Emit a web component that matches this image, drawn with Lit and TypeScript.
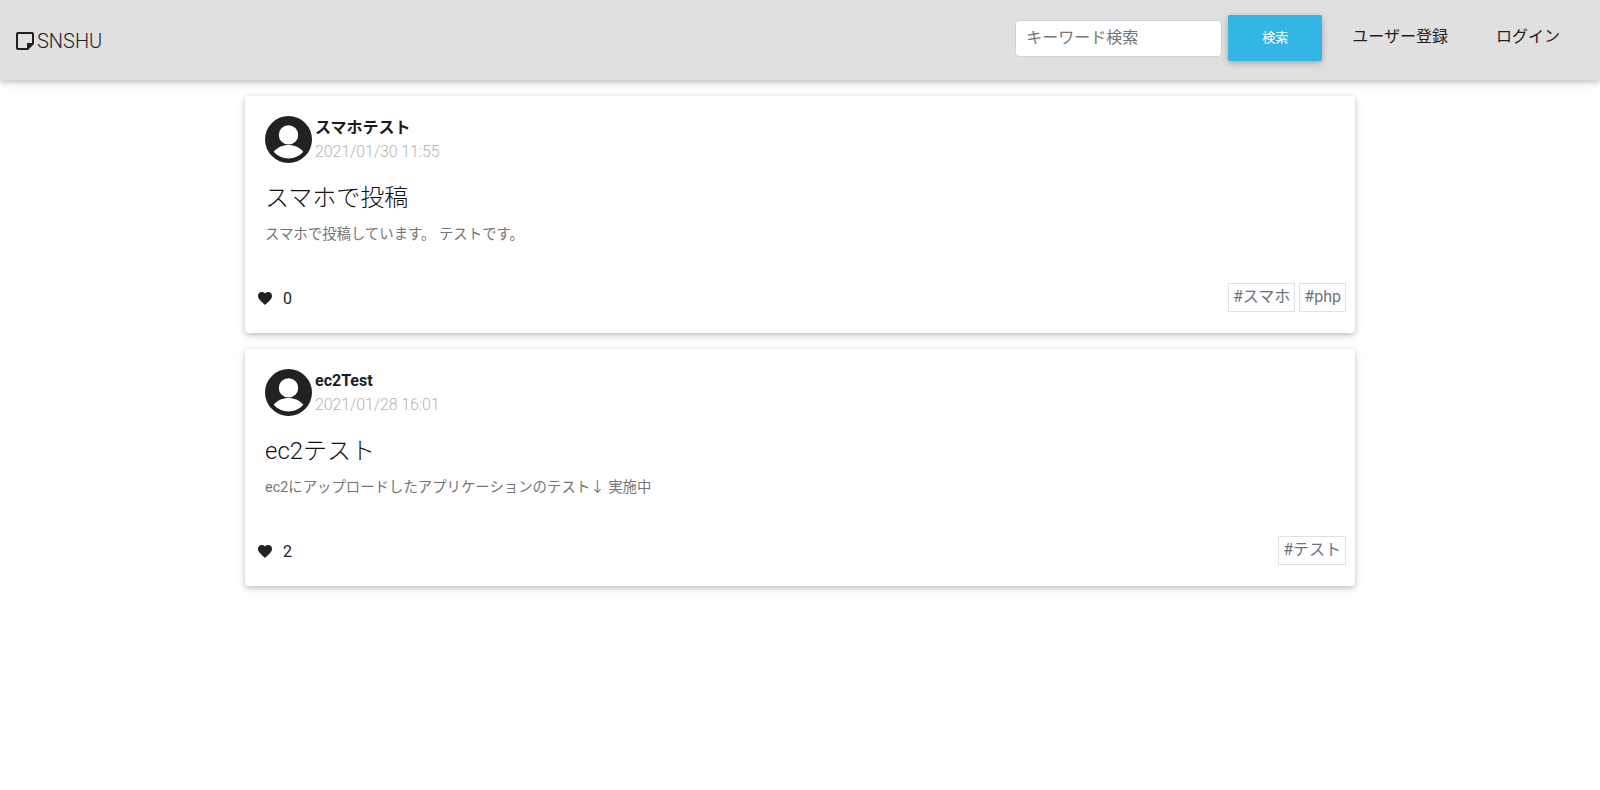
import { LitElement, css, html } from "lit";
import { customElement, property } from "lit/decorators.js";

interface Post {
  user: string;
  date: string;
  title: string;
  body: string;
  likes: number;
  tags: string[];
}

const POSTS: Post[] = [
  {
    user: "スマホテスト",
    date: "2021/01/30 11:55",
    title: "スマホで投稿",
    body: "スマホで投稿しています。 テストです。",
    likes: 0,
    tags: ["#スマホ", "#php"],
  },
  {
    user: "ec2Test",
    date: "2021/01/28 16:01",
    title: "ec2テスト",
    body: "ec2にアップロードしたアプリケーションのテスト↓ 実施中",
    likes: 2,
    tags: ["#テスト"],
  },
];

@customElement("post-card")
export class PostCard extends LitElement {
  static styles = css`
    :host {
      display: block;
    }
    .card {
      background: #fff;
      border-radius: 4px;
      height: 237px;
      box-sizing: border-box;
      padding: 20px 9px 0 12px;
      display: flex;
      flex-direction: column;
      box-shadow: 0 2px 5px 0 rgba(0, 0, 0, 0.16),
        0 2px 10px 0 rgba(0, 0, 0, 0.12);
    }
    .head {
      display: flex;
      gap: 3px;
      padding-left: 8px;
      height: 47px;
    }
    .avatar {
      width: 47px;
      height: 47px;
      display: block;
      flex: none;
    }
    .who {
      margin-top: 2px;
    }
    .user {
      font-size: 16px;
      font-weight: 700;
      line-height: 20px;
      color: #1c1c1c;
    }
    .date {
      margin-top: 1px;
      font-size: 16px;
      font-weight: 300;
      line-height: 26px;
      letter-spacing: -0.12px;
      color: #b4b4b4;
    }
    h2 {
      margin: 17px 0 0 8px;
      font-size: 24px;
      font-weight: 300;
      line-height: 36px;
      color: #111;
    }
    p {
      margin: 9px 0 0 8px;
      font-size: 14.4px;
      font-weight: 400;
      line-height: 20px;
      color: #757575;
    }
    .foot {
      margin-top: auto;
      display: flex;
      align-items: center;
      justify-content: space-between;
      padding-bottom: 21px;
    }
    .likes {
      display: flex;
      align-items: center;
      gap: 11px;
      margin-top: 2px;
      font-size: 16px;
      color: #212121;
    }
    .heart {
      width: 14px;
      height: 13px;
      display: block;
      margin-left: 1px;
    }
    .tags {
      display: flex;
      gap: 4px;
    }
    .tag {
      height: 29px;
      box-sizing: border-box;
      border: 1px solid #dee2e6;
      padding: 0 4px;
      font-size: 16px;
      line-height: 26px;
      color: #6c757d;
    }
  `;

  @property({ attribute: false })
  post!: Post;

  render() {
    const p = this.post;
    return html`<div class="card">
      <div class="head">
        <svg class="avatar" viewBox="0 0 46 46">
          <circle cx="23" cy="23" r="23" fill="#212121"></circle>
          <circle cx="23" cy="18.500" r="9.500" fill="#fff"></circle>
          <path
            d="M8.500 35C12.500 30.500 17.500 28.500 23 28.500S33.500 30.500 37.500 35C33.500 39.500 28.500 41.500 23 41.500S12.500 39.500 8.500 35z"
            fill="#fff"
          ></path>
        </svg>
        <div class="who">
          <div class="user">${p.user}</div>
          <div class="date">${p.date}</div>
        </div>
      </div>
      <h2>${p.title}</h2>
      <p>${p.body}</p>
      <div class="foot">
        <div class="likes">
          <svg class="heart" viewBox="0 0 24 22">
            <path
              d="M12 22l-1.700-1.600C4.100 14.800 0 11.100 0 6.600 0 2.900 2.900 0 6.600 0c2.100 0 4.100 1 5.400 2.500C13.300 1 15.300 0 17.400 0 21.100 0 24 2.900 24 6.600c0 4.500-4.100 8.200-10.300 13.800z"
              fill="#212121"
            ></path>
          </svg>
          <span>${p.likes}</span>
        </div>
        <div class="tags">
          ${p.tags.map((t) => html`<span class="tag">${t}</span>`)}
        </div>
      </div>
    </div>`;
  }
}

@customElement("app-root")
export class AppRoot extends LitElement {
  static styles = css`
    :host {
      display: block;
      font-family: Roboto, "Noto Sans CJK JP", sans-serif;
      background: #fff;
      min-height: 790px;
    }
    header {
      height: 80px;
      background: #e0e0e0;
      display: flex;
      align-items: center;
      padding: 0 16px;
      box-sizing: border-box;
      box-shadow: 0 2px 5px 0 rgba(0, 0, 0, 0.16),
        0 2px 10px 0 rgba(0, 0, 0, 0.12);
      position: relative;
    }
    .logo {
      display: flex;
      align-items: center;
      gap: 3px;
      margin-top: 2px;
      font-size: 20px;
      font-weight: 300;
      color: #212121;
    }
    .logo svg {
      width: 18px;
      height: 18px;
      display: block;
    }
    .spacer {
      flex: 1;
    }
    .search {
      width: 207px;
      height: 37px;
      box-sizing: border-box;
      background: #fff;
      border: 1px solid #ced4da;
      border-radius: 4px;
      padding: 0 10px;
      font-size: 16px;
      line-height: 33px;
      color: #757575;
      margin: 0 6px 4px 0;
    }
    .btn {
      width: 94px;
      height: 46px;
      background: #33b5e5;
      color: #fff;
      border-radius: 2px;
      font-size: 13px;
      display: flex;
      align-items: center;
      justify-content: center;
      padding-bottom: 4px;
      box-sizing: border-box;
      box-shadow: 0 2px 5px 0 rgba(0, 0, 0, 0.16),
        0 2px 10px 0 rgba(0, 0, 0, 0.12);
      margin: 0 30px 4px 0;
    }
    .link {
      font-size: 16px;
      color: #212121;
      margin-bottom: 10px;
    }
    .link.reg {
      margin-right: 48px;
    }
    .link.login {
      margin-right: 24px;
    }
    main {
      width: 1110px;
      margin: 0 auto;
      padding-top: 16px;
      display: flex;
      flex-direction: column;
      gap: 16px;
    }
  `;

  render() {
    return html`<header>
        <div class="logo">
          <svg viewBox="0 0 18 18">
            <path
              d="M16 2v9h-5v5H2V2h14m0-2H2C.9 0 0 .9 0 2v14c0 1.100.9 2 2 2h10l6-6V2c0-1.100-.9-2-2-2z"
              fill="#212121"
            ></path>
            <path d="M13 13h2.500L13 15.500z" fill="#212121"></path>
          </svg>
          <span>SNSHU</span>
        </div>
        <div class="spacer"></div>
        <div class="search">キーワード検索</div>
        <div class="btn">検索</div>
        <div class="link reg">ユーザー登録</div>
        <div class="link login">ログイン</div>
      </header>
      <main>${POSTS.map((p) => html`<post-card .post=${p}></post-card>`)}</main>`;
  }
}
